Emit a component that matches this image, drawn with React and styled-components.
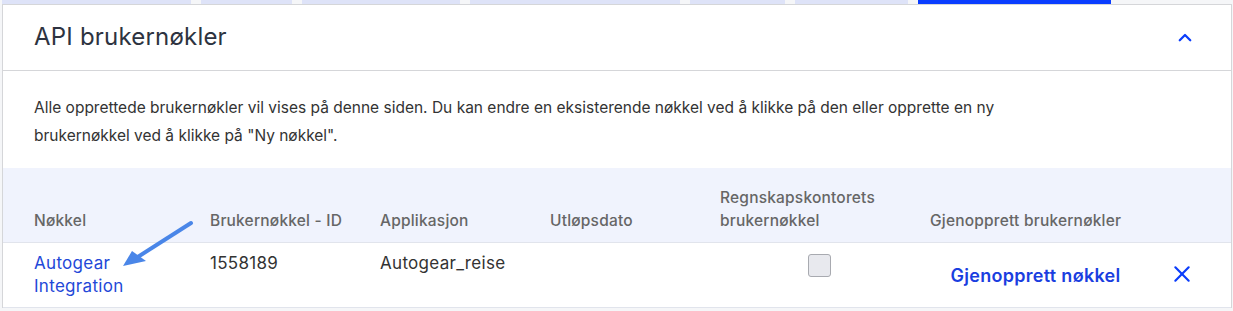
import React from 'react'
import styled, { createGlobalStyle } from 'styled-components'

const GlobalStyle = createGlobalStyle`
  body {
    margin: 0;
    background: #f5f6f8;
    font-family: Inter, "Noto Sans", sans-serif;
  }
`

const tabs = [
  { width: 189, active: false },
  { width: 91, active: false },
  { width: 158, active: false },
  { width: 210, active: false },
  { width: 95, active: false },
  { width: 113, active: false },
  { width: 193, active: true },
]

const columns = [
  { label: 'Nøkkel' },
  { label: 'Brukernøkkel - ID' },
  { label: 'Applikasjon' },
  { label: 'Utløpsdato' },
  { label: ['Regnskapskontorets', 'brukernøkkel'] },
  { label: 'Gjenopprett brukernøkler' },
  { label: '' },
]

const ChevronUp = () => (
  <svg width="18" height="18" viewBox="0 0 24 24" fill="none" stroke="#0b3dfb" strokeWidth="3" strokeLinecap="round" strokeLinejoin="round">
    <polyline points="5 15 12 8 19 15" />
  </svg>
)

const CloseIcon = () => (
  <svg width="20" height="20" viewBox="0 0 24 24" fill="none" stroke="#0b3dfb" strokeWidth="2.6" strokeLinecap="round">
    <line x1="4" y1="4" x2="20" y2="20" />
    <line x1="20" y1="4" x2="4" y2="20" />
  </svg>
)

const App = () => (
  <>
    <GlobalStyle />
    <Page>
      <TabStrip>
        {tabs.map((t, i) => (
          <Tab key={i} $active={t.active} style={{ width: t.width }} />
        ))}
      </TabStrip>
      <Card>
        <CardHeader>
          <Title>API brukernøkler</Title>
          <ToggleButton aria-label="Skjul">
            <ChevronUp />
          </ToggleButton>
        </CardHeader>
        <Description>
          Alle opprettede brukernøkler vil vises på denne siden. Du kan endre en eksisterende nøkkel ved å klikke på den eller opprette en ny
          <br />
          brukernøkkel ved å klikke på "Ny nøkkel".
        </Description>
        <Table>
          <HeadRow>
            {columns.map((c, i) => (
              <HeadCell key={i}>
                {Array.isArray(c.label)
                  ? c.label.map((l) => <div key={l}>{l}</div>)
                  : c.label}
              </HeadCell>
            ))}
          </HeadRow>
          <BodyRow>
            <Cell>
              <KeyLink href="#">
                Autogear
                <br />
                Integration
              </KeyLink>
            </Cell>
            <Cell>1558189</Cell>
            <Cell>Autogear_reise</Cell>
            <Cell />
            <CheckCell>
              <Checkbox type="checkbox" />
            </CheckCell>
            <CenterCell>
              <RestoreButton>Gjenopprett nøkkel</RestoreButton>
            </CenterCell>
            <CenterCell>
              <IconButton aria-label="Slett">
                <CloseIcon />
              </IconButton>
            </CenterCell>
          </BodyRow>
          <Annotation width="90" height="70" viewBox="0 0 90 70">
            <line x1="80" y1="13" x2="22" y2="50" stroke="#4a86e8" strokeWidth="4" strokeLinecap="round" />
            <polygon points="12,56 21,41 35,51" fill="#4a86e8" />
          </Annotation>
        </Table>
      </Card>
    </Page>
  </>
)

const Page = styled.div`
  padding: 0 1px 0 2px;
`

const TabStrip = styled.div`
  display: flex;
  gap: 10px;
  height: 4px;
`

const Tab = styled.div`
  height: 4px;
  background: ${(p) => (p.$active ? '#0a3dff' : '#dee3f8')};
`

const Card = styled.div`
  background: #fff;
  border: 1px solid #d5d6d9;
  border-bottom: none;
`

const CardHeader = styled.div`
  display: flex;
  align-items: center;
  justify-content: space-between;
  height: 65px;
  padding: 0 37px 0 31px;
  border-bottom: 1px solid #d5d6d9;
`

const Title = styled.h2`
  margin: 0;
  font-size: 24px;
  font-weight: 400;
  letter-spacing: 0.2px;
  color: #2d3340;
  padding-bottom: 3px;
`

const ToggleButton = styled.button`
  border: none;
  background: none;
  padding: 0;
  display: flex;
  cursor: pointer;
`

const Description = styled.p`
  margin: 0;
  padding: 23px 31px 18px;
  font-size: 15.5px;
  line-height: 28px;
  color: #333;
`

const Table = styled.div`
  position: relative;
`

const grid = `
  display: grid;
  grid-template-columns: 176px 170px 170px 170px 210px 211px 1fr;
  padding-left: 31px;
`

const HeadRow = styled.div`
  ${grid}
  background: #f0f3fd;
  height: 75px;
  align-items: end;
  padding-bottom: 10px;
  box-sizing: border-box;
  border-bottom: 1px solid #e1e4ec;
`

const HeadCell = styled.div`
  font-size: 15.5px;
  font-weight: 500;
  line-height: 23px;
  color: #666;
  letter-spacing: 0.2px;
`

const BodyRow = styled.div`
  ${grid}
  height: 65px;
  box-sizing: border-box;
  border-bottom: 1px solid #e1e4ec;
`

const Cell = styled.div`
  padding-top: 9px;
  font-size: 17px;
  line-height: 23px;
  color: #333;
  letter-spacing: 0.3px;
`

const CheckCell = styled.div`
  display: flex;
  justify-content: center;
  padding: 11px 11px 0 0;
`

const CenterCell = styled.div`
  display: flex;
  align-items: center;
  justify-content: center;
`

const KeyLink = styled.a`
  color: #2348d8;
  text-decoration: none;
`

const Checkbox = styled.input`
  appearance: none;
  margin: 0;
  width: 23px;
  height: 23px;
  border: 1px solid #a8aab0;
  border-radius: 3px;
  background: #e8e9ee;
`

const RestoreButton = styled.button`
  border: none;
  background: none;
  padding: 0;
  font-family: inherit;
  font-size: 18px;
  font-weight: 600;
  letter-spacing: 0.3px;
  color: #1a3ee0;
  cursor: pointer;
`

const IconButton = styled.button`
  border: none;
  background: none;
  padding: 0 0 2px 0;
  margin-right: 8px;
  display: flex;
  cursor: pointer;
`

const Annotation = styled.svg`
  position: absolute;
  left: 108px;
  top: 42px;
  pointer-events: none;
`

export default App
